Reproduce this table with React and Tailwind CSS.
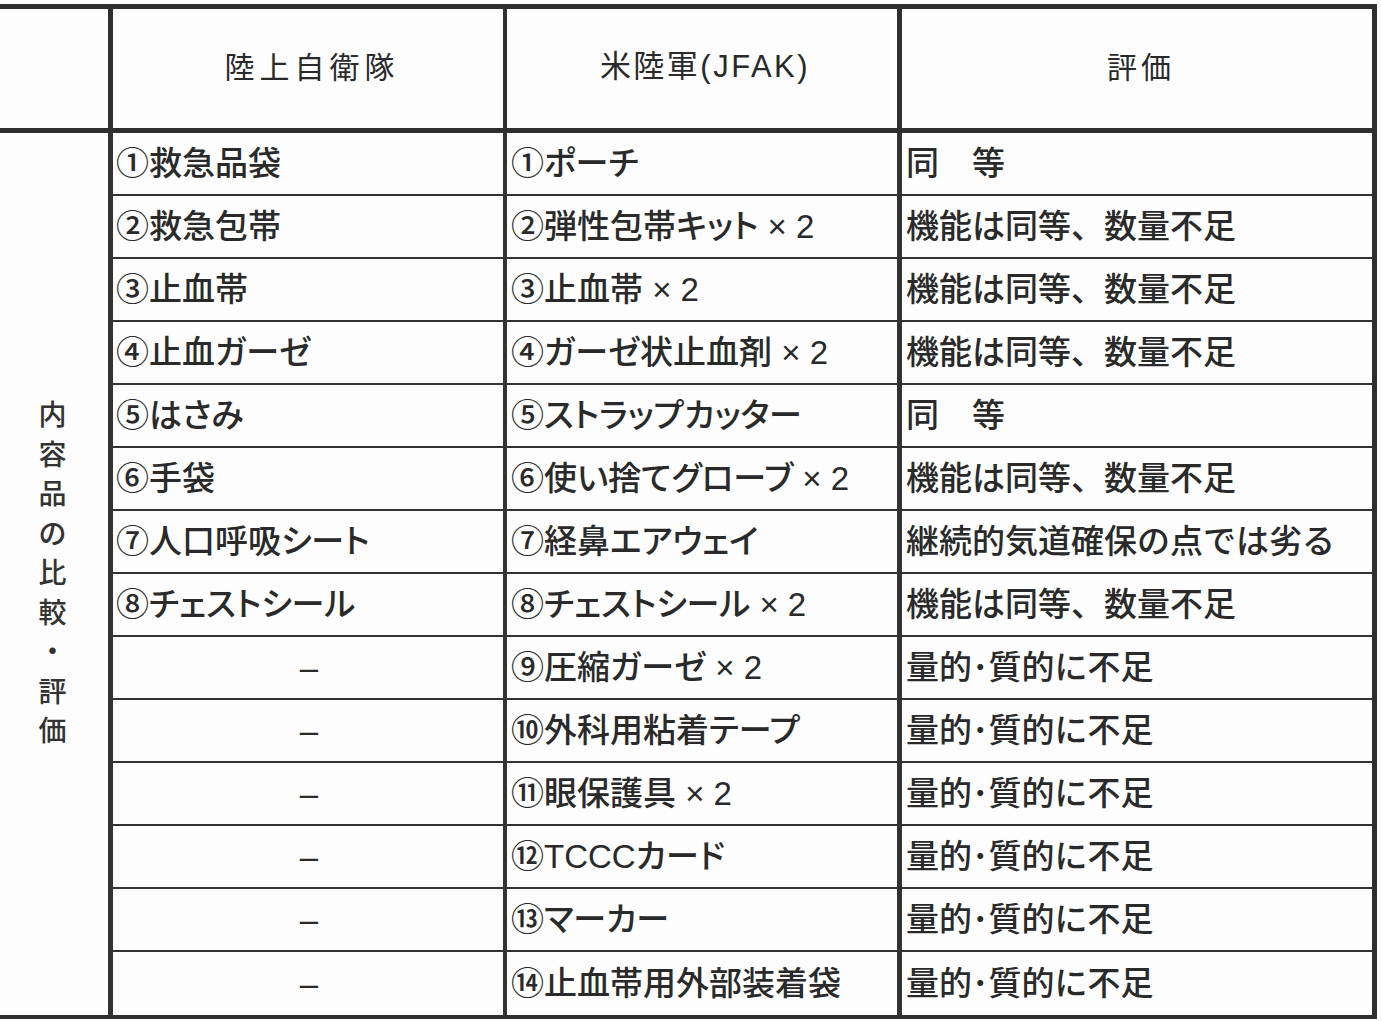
import React from "react";

const FONT = { fontFamily: '"Liberation Sans", "Noto Sans CJK JP", sans-serif' };
const PALT = { fontFeatureSettings: '"palt"' };

const rows = [
  ["①救急品袋", "①ポーチ", "同　等"],
  ["②救急包帯", "②弾性包帯キット × 2", "機能は同等、数量不足"],
  ["③止血帯", "③止血帯 × 2", "機能は同等、数量不足"],
  ["④止血ガーゼ", "④ガーゼ状止血剤 × 2", "機能は同等、数量不足"],
  ["⑤はさみ", "⑤ストラップカッター", "同　等"],
  ["⑥手袋", "⑥使い捨てグローブ × 2", "機能は同等、数量不足"],
  ["⑦人口呼吸シート", "⑦経鼻エアウェイ", "継続的気道確保の点では劣る"],
  ["⑧チェストシール", "⑧チェストシール × 2", "機能は同等、数量不足"],
  ["–", "⑨圧縮ガーゼ × 2", "量的･質的に不足"],
  ["–", "⑩外科用粘着テープ", "量的･質的に不足"],
  ["–", "⑪眼保護具 × 2", "量的･質的に不足"],
  ["–", "⑫TCCCカード", "量的･質的に不足"],
  ["–", "⑬マーカー", "量的･質的に不足"],
  ["–", "⑭止血帯用外部装着袋", "量的･質的に不足"],
];

const sideLabel = ["内", "容", "品", "の", "比", "較", "・", "評", "価"];

export default function App() {
  return (
    <div className="w-[1381px] h-[1021px] bg-[#fdfdfd] overflow-hidden pt-[4px]" style={FONT}>
      <div className="w-[1377px] border-t-[5px] border-b-[4px] border-r-[5px] border-[#2f2f2f] grid grid-cols-[108px_395px_394px_475px] text-[#2a2a2a]">
        {/* header */}
        <div className="h-[124px] border-b-[5px] border-[#2f2f2f]" />
        <div className="h-[124px] border-b-[5px] border-l-[5px] border-[#2f2f2f] flex items-center justify-center pb-[3px] text-[30px] tracking-[5px] pl-[8px]">
          陸上自衛隊
        </div>
        <div className="h-[124px] border-b-[5px] border-l-[4px] border-[#2f2f2f] flex items-center justify-center pb-[3px] text-[31px] tracking-[2.5px] pl-[6px]">
          米陸軍(JFAK)
        </div>
        <div className="h-[124px] border-b-[5px] border-l-[5px] border-[#2f2f2f] flex items-center justify-center pb-[3px] text-[30px] tracking-[4px] pl-[8px]">
          評価
        </div>

        {/* left merged cell */}
        <div className="flex flex-col items-center justify-center pr-[3px] text-[28px] font-medium text-[#333]" style={{ gridRow: "2 / span 14", gridColumn: 1 }}>
          {sideLabel.map((c, i) => (
            <div key={i} className="leading-[39.5px] h-[39.5px]">
              {c}
            </div>
          ))}
        </div>

        {rows.map((r, i) => {
          const last = i === rows.length - 1;
          const bb = last ? "" : "border-b-[2px]";
          return (
            <React.Fragment key={i}>
              <div
                className={`h-[63px] border-l-[5px] ${bb} border-[#333] flex items-center text-[33px] font-medium leading-none whitespace-pre ${
                  r[0] === "–" ? "justify-center pl-[2px]" : "pl-[3px]"
                }`}
                style={{ gridColumn: 2, ...PALT }}
              >
                {r[0]}
              </div>
              <div
                className={`h-[63px] border-l-[4px] ${bb} border-[#333] flex items-center pl-[4px] text-[33px] font-medium leading-none whitespace-pre`}
                style={{ gridColumn: 3, ...PALT }}
              >
                {r[1]}
              </div>
              <div
                className={`h-[63px] border-l-[5px] ${bb} border-[#333] flex items-center pl-[4px] text-[33px] font-medium leading-none whitespace-pre`}
                style={{ gridColumn: 4 }}
              >
                {r[2]}
              </div>
            </React.Fragment>
          );
        })}
      </div>
    </div>
  );
}
